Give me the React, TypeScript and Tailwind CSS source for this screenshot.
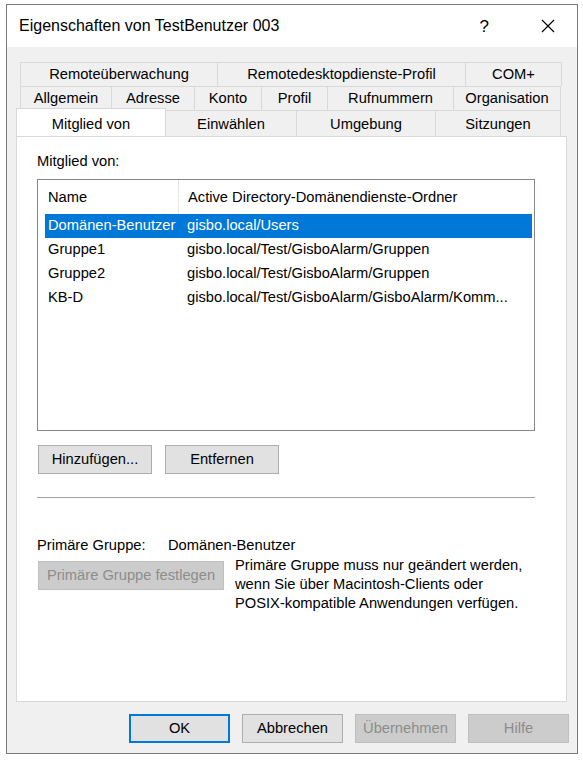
import React from "react";

const font = { fontFamily: '"Liberation Sans", Arial, sans-serif' };

type Tab = { label: string; w: string };

const row1: Tab[] = [
  { label: "Remoteüberwachung", w: "w-[198px]" },
  { label: "Remotedesktopdienste-Profil", w: "w-[249px]" },
  { label: "COM+", w: "w-[97px]" },
];

const row2: Tab[] = [
  { label: "Allgemein", w: "w-[92px]" },
  { label: "Adresse", w: "w-[84px]" },
  { label: "Konto", w: "w-[68px]" },
  { label: "Profil", w: "w-[67px]" },
  { label: "Rufnummern", w: "w-[127px]" },
  { label: "Organisation", w: "w-[108px]" },
];

const row3: Tab[] = [
  { label: "Einwählen", w: "w-[132px]" },
  { label: "Umgebung", w: "w-[140px]" },
  { label: "Sitzungen", w: "w-[126px]" },
];

const groups = [
  { name: "Domänen-Benutzer", path: "gisbo.local/Users" },
  { name: "Gruppe1", path: "gisbo.local/Test/GisboAlarm/Gruppen" },
  { name: "Gruppe2", path: "gisbo.local/Test/GisboAlarm/Gruppen" },
  { name: "KB-D", path: "gisbo.local/Test/GisboAlarm/GisboAlarm/Komm..." },
];

function TabRow({ tabs }: { tabs: Tab[] }) {
  return (
    <div className="flex h-[24px] ml-[4px]">
      {tabs.map((t) => (
        <div
          key={t.label}
          className={`${t.w} flex items-center justify-center border border-b-0 border-[#d9d9d9] -ml-px first:ml-0 bg-[#f0f0f0] text-black`}
        >
          {t.label}
        </div>
      ))}
    </div>
  );
}

function Button({
  children,
  w,
  disabled,
  def,
}: {
  children: React.ReactNode;
  w: string;
  disabled?: boolean;
  def?: boolean;
}) {
  const look = disabled
    ? "bg-[#cccccc] border-[#bfbfbf] text-[#8d8d8d]"
    : def
      ? "bg-[#e1e1e1] border-2 border-[#0078d7] text-black"
      : "bg-[#e1e1e1] border-[#adadad] text-black";
  return (
    <div className={`${w} h-[29px] border flex items-center justify-center ${look}`}>
      {children}
    </div>
  );
}

export default function App() {
  return (
    <div className="w-[583px] h-[761px] bg-white pt-[4px] pl-[6px]" style={font}>
      <div className="w-[572px] h-[750px] border border-[#7a7a7a] flex flex-col text-[14.7px] leading-none">
        {/* title bar */}
        <div className="h-[42px] bg-white flex items-center pl-[12px] shrink-0">
          <span className="text-[16px] text-black">Eigenschaften von TestBenutzer 003</span>
          <span className="ml-auto text-[17px] text-black mr-[52px]">?</span>
          <svg width="14" height="14" viewBox="0 0 14 14" className="mr-[22px]">
            <path d="M1 1 L13 13 M13 1 L1 13" stroke="#000" strokeWidth="1.2" />
          </svg>
        </div>

        {/* dialog body */}
        <div className="flex-1 bg-[#f0f0f0] pt-[15px] pl-[9px] pr-[8px] flex flex-col">
          <div className="w-[551px]">
            <TabRow tabs={row1} />
            <TabRow tabs={row2} />
            <div className="flex h-[26px] relative">
              <div className="w-[150px] h-[28px] -mt-[2px] bg-white border border-b-0 border-[#d9d9d9] flex items-start justify-center pt-[8px] relative z-10">
                Mitglied von
              </div>
              {row3.map((t) => (
                <div
                  key={t.label}
                  className={`${t.w} flex items-center justify-center pt-px border border-b-0 border-[#d9d9d9] -ml-px bg-[#f0f0f0]`}
                >
                  {t.label}
                </div>
              ))}
            </div>

            {/* tab page */}
            <div className="h-[566px] bg-white border border-[#d9d9d9] pt-[15px] pl-[20px] pr-[31px]">
              <div className="h-[18px] flex items-center">Mitglied von:</div>

              <div className="mt-[9px] h-[252px] border border-[#828790] bg-white pl-[7px] pr-[2px]">
                <div className="h-[34px] flex items-center -ml-[7px] -mr-[2px]">
                  <div className="w-[141px] h-full flex items-center pl-[10px] border-r border-[#e5e5e5]">
                    Name
                  </div>
                  <div className="pl-[9px]">Active Directory-Domänendienste-Ordner</div>
                </div>
                {groups.map((g, i) => (
                  <div
                    key={g.name}
                    className={`h-[23.7px] flex items-center whitespace-nowrap ${
                      i === 0 ? "bg-[#0078d7] text-white" : "text-black"
                    }`}
                  >
                    <div className="w-[142px] pl-[3px]">{g.name}</div>
                    <div>{g.path}</div>
                  </div>
                ))}
              </div>

              <div className="mt-[14px] flex gap-[13px] pl-px">
                <Button w="w-[114px]">Hinzufügen...</Button>
                <Button w="w-[114px]">Entfernen</Button>
              </div>

              <div className="mt-[23px] h-px bg-[#a0a0a0]" />

              <div className="mt-[38px] flex items-center h-[18px]">
                <span className="w-[131px]">Primäre Gruppe:</span>
                <span>Domänen-Benutzer</span>
              </div>

              <div className="mt-[7px] flex items-start pl-px">
                <Button w="w-[186px]" disabled>
                  Primäre Gruppe festlegen
                </Button>
                <p className="ml-[11px] -mt-[5px] leading-[19px]">
                  Primäre Gruppe muss nur geändert werden,
                  <br />
                  wenn Sie über Macintosh-Clients oder
                  <br />
                  POSIX-kompatible Anwendungen verfügen.
                </p>
              </div>
            </div>
          </div>

          {/* dialog buttons */}
          <div className="mt-[12px] flex justify-end gap-[12px]">
            <Button w="w-[101px]" def>
              OK
            </Button>
            <Button w="w-[101px]">Abbrechen</Button>
            <Button w="w-[101px]" disabled>
              Übernehmen
            </Button>
            <Button w="w-[101px]" disabled>
              Hilfe
            </Button>
          </div>
        </div>
      </div>
    </div>
  );
}
